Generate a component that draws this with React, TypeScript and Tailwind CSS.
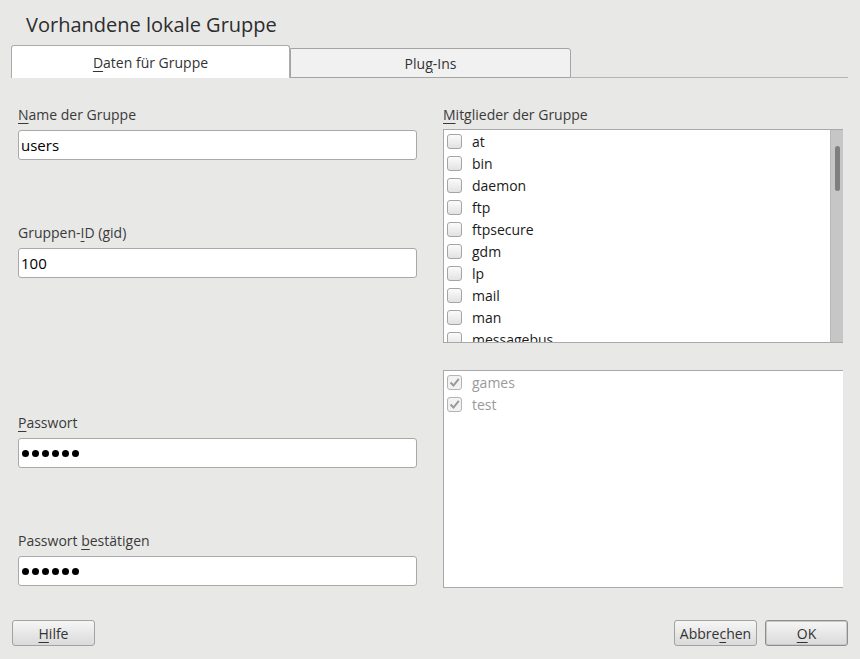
import React from "react";

const members = ["at", "bin", "daemon", "ftp", "ftpsecure", "gdm", "lp", "mail", "man", "messagebus"];
const current = ["games", "test"];

function Mn({ text, at }: { text: string; at: number }) {
  return (
    <>
      {text.slice(0, at)}
      <span className="underline decoration-1 underline-offset-[3px]">{text[at]}</span>
      {text.slice(at + 1)}
    </>
  );
}

function Field({ label, at, value, secret, top }: { label: string; at: number; value?: string; secret?: boolean; top: string }) {
  return (
    <div className={top}>
      <div className="h-[18px] leading-[18px] text-[14px] text-[#3a3a3a] mb-[6px]">
        <Mn text={label} at={at} />
      </div>
      <div className="h-[30px] rounded-[3px] border border-[#a9a9a9] bg-white flex items-center pl-[2px] text-[15px] text-black">
        {secret ? (
          <div className="flex gap-[3px] pl-[1px]">
            {[0, 1, 2, 3, 4, 5].map((i) => (
              <div key={i} className="w-[7px] h-[7px] rounded-full bg-black" />
            ))}
          </div>
        ) : (
          value
        )}
      </div>
    </div>
  );
}

function Check({ checked }: { checked?: boolean }) {
  return (
    <div
      className={
        "w-[15px] h-[15px] rounded-[3px] border flex items-center justify-center " +
        (checked ? "border-[#b4b4b4] bg-[#f2f2f2]" : "border-[#a4a4a4] bg-gradient-to-b from-[#fbfbfb] to-[#e2e2e2]")
      }
    >
      {checked && (
        <svg width="11" height="11" viewBox="0 0 11 11">
          <path d="M1.5 5.5 L4.5 8.5 L9.8 1.8" fill="none" stroke="#9a9a9a" strokeWidth="2" />
        </svg>
      )}
    </div>
  );
}

function Btn({ children, strong }: { children: React.ReactNode; strong?: boolean }) {
  return (
    <div
      className={
        "w-[83px] h-[26px] rounded-[3px] flex items-center justify-center text-[14px] text-[#333] bg-gradient-to-b from-[#f6f6f6] to-[#dadada] " +
        (strong ? "border border-[#8e8e8e] shadow-[inset_0_0_0_1px_#c8c8c8]" : "border border-[#a2a2a2]")
      }
    >
      {children}
    </div>
  );
}

export default function App() {
  return (
    <div className="w-[860px] h-[659px] bg-[#e8e8e7] flex flex-col" style={{ fontFamily: '"Open Sans", "Noto Sans", sans-serif' }}>
      <div className="pl-[26px] pt-[10px] h-[45px] text-[20px] leading-[30px] text-[#2d2d2d]">Vorhandene lokale Gruppe</div>

      <div className="flex items-end ml-[11px] mr-[12px] h-[33px]">
        <div className="w-[279px] h-[33px] bg-white border border-b-0 border-[#ababab] rounded-t-[3px] flex items-center justify-center text-[14px] text-[#333]">
          <Mn text="Daten für Gruppe" at={0} />
        </div>
        <div className="w-[281px] h-[30px] bg-[#f1f1f1] border border-[#a4a4a4] rounded-tr-[3px] flex items-center justify-center text-[14px] text-[#333]">
          <Mn text="Plug-Ins" at={3} />
        </div>
        <div className="flex-1 border-b border-[#b4b4b4]" />
      </div>

      <div className="flex">
        <div className="ml-[18px] w-[399px] flex flex-col">
          <Field label="Name der Gruppe" at={0} value="users" top="mt-[28px]" />
          <Field label="Gruppen-ID (gid)" at={8} value="100" top="mt-[64px]" />
          <Field label="Passwort" at={0} secret top="mt-[136px]" />
          <Field label="Passwort bestätigen" at={9} secret top="mt-[64px]" />
        </div>

        <div className="ml-[26px] w-[400px] flex flex-col">
          <div className="mt-[28px] h-[18px] leading-[18px] text-[14px] text-[#3a3a3a] mb-[5px]">
            <Mn text="Mitglieder der Gruppe" at={0} />
          </div>
          <div className="h-[214px] border border-r-0 border-[#a9a9a9] bg-white flex overflow-hidden">
            <div className="flex-1 flex flex-col">
              {members.map((m) => (
                <div key={m} className="h-[22px] flex items-center pl-[3px] gap-[10px] text-[14px] text-[#1a1a1a] shrink-0">
                  <Check />
                  <span>{m}</span>
                </div>
              ))}
            </div>
            <div className="w-[13px] bg-[#c6c6c6] border-l border-[#b8b8b8] pt-[16px] flex justify-center">
              <div className="w-[5px] h-[45px] rounded-full bg-[#7f7f7f]" />
            </div>
          </div>

          <div className="mt-[27px] h-[218px] border border-r-0 border-[#a9a9a9] bg-white flex flex-col">
            {current.map((m) => (
              <div key={m} className="h-[22px] flex items-center pl-[3px] gap-[10px] text-[14px] text-[#9a9a9a]">
                <Check checked />
                <span>{m}</span>
              </div>
            ))}
          </div>
        </div>
      </div>

      <div className="flex mt-[32px] pl-[12px] pr-[12px]">
        <Btn>
          <Mn text="Hilfe" at={0} />
        </Btn>
        <div className="flex-1" />
        <Btn>
          <Mn text="Abbrechen" at={5} />
        </Btn>
        <div className="w-[8px]" />
        <Btn strong>
          <Mn text="OK" at={0} />
        </Btn>
      </div>
    </div>
  );
}
